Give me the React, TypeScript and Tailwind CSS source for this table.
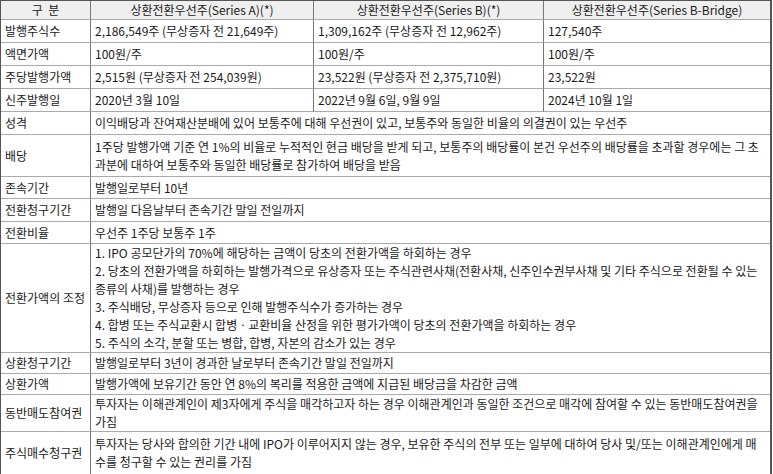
import React from "react";

type Row = {
  label: string;
  h: string;
  cells: React.ReactNode[];
};

const rows: Row[] = [
  {
    label: "발행주식수",
    h: "h-[23px]",
    cells: ["2,186,549주 (무상증자 전 21,649주)", "1,309,162주 (무상증자 전 12,962주)", "127,540주"],
  },
  { label: "액면가액", h: "h-[23px]", cells: ["100원/주", "100원/주", "100원/주"] },
  {
    label: "주당발행가액",
    h: "h-[23px]",
    cells: ["2,515원 (무상증자 전 254,039원)", "23,522원 (무상증자 전 2,375,710원)", "23,522원"],
  },
  { label: "신주발행일", h: "h-[23px]", cells: ["2020년 3월 10일", "2022년 9월 6일, 9월 9일", "2024년 10월 1일"] },
  {
    label: "성격",
    h: "h-[23px]",
    cells: ["이익배당과 잔여재산분배에 있어 보통주에 대해 우선권이 있고, 보통주와 동일한 비율의 의결권이 있는 우선주"],
  },
  {
    label: "배당",
    h: "h-[42px]",
    cells: [
      "1주당 발행가액 기준 연 1%의 비율로 누적적인 현금 배당을 받게 되고, 보통주의 배당률이 본건 우선주의 배당률을 초과할 경우에는 그 초과분에 대하여 보통주와 동일한 배당률로 참가하여 배당을 받음",
    ],
  },
  { label: "존속기간", h: "h-[22px]", cells: ["발행일로부터 10년"] },
  { label: "전환청구기간", h: "h-[23px]", cells: ["발행일 다음날부터 존속기간 말일 전일까지"] },
  { label: "전환비율", h: "h-[22px]", cells: ["우선주 1주당 보통주 1주"] },
  {
    label: "전환가액의 조정",
    h: "h-[108px]",
    cells: [
      <>
        <div>1. IPO 공모단가의 70%에 해당하는 금액이 당초의 전환가액을 하회하는 경우</div>
        <div>
          2. 당초의 전환가액을 하회하는 발행가격으로 유상증자 또는 주식관련사채(전환사채, 신주인수권부사채 및 기타 주식으로 전환될 수 있는
          종류의 사채)를 발행하는 경우
        </div>
        <div>3. 주식배당, 무상증자 등으로 인해 발행주식수가 증가하는 경우</div>
        <div>4. 합병 또는 주식교환시 합병ㆍ교환비율 산정을 위한 평가가액이 당초의 전환가액을 하회하는 경우</div>
        <div>5. 주식의 소각, 분할 또는 병합, 합병, 자본의 감소가 있는 경우</div>
      </>,
    ],
  },
  { label: "상환청구기간", h: "h-[21px]", cells: ["발행일로부터 3년이 경과한 날로부터 존속기간 말일 전일까지"] },
  { label: "상환가액", h: "h-[21px]", cells: ["발행가액에 보유기간 동안 연 8%의 복리를 적용한 금액에 지급된 배당금을 차감한 금액"] },
  {
    label: "동반매도참여권",
    h: "h-[37px]",
    cells: ["투자자는 이해관계인이 제3자에게 주식을 매각하고자 하는 경우 이해관계인과 동일한 조건으로 매각에 참여할 수 있는 동반매도참여권을 가짐"],
  },
  {
    label: "주식매수청구권",
    h: "h-[42px]",
    cells: ["투자자는 당사와 합의한 기간 내에 IPO가 이루어지지 않는 경우, 보유한 주식의 전부 또는 일부에 대하여 당사 및/또는 이해관계인에게 매수를 청구할 수 있는 권리를 가짐"],
  },
];

const headers = ["상환전환우선주(Series A)(*)", "상환전환우선주(Series B)(*)", "상환전환우선주(Series B-Bridge)"];

export default function App() {
  return (
    <div className="w-[773px] h-[474px] bg-white text-[#1a1a1a] text-[12px] leading-[18px] font-['Noto_Sans_CJK_KR',sans-serif]">
      <div className="w-[772px] border-t border-l border-r-2 border-b-2 border-[#555]">
        <table className="w-full table-fixed border-separate border-spacing-0">
          <colgroup>
            <col className="w-[90px]" />
            <col className="w-[223px]" />
            <col className="w-[230px]" />
            <col />
          </colgroup>
          <thead>
            <tr className="h-[19px] bg-[#efefef]">
              <th className="font-normal text-center border-r border-b border-r-[#777] border-b-[#aaa] whitespace-pre">구  분</th>
              {headers.map((h, i) => (
                <th
                  key={h}
                  className={`font-normal text-center border-b border-b-[#aaa] ${i < 2 ? "border-r border-r-[#777]" : ""}`}
                >
                  {h}
                </th>
              ))}
            </tr>
          </thead>
          <tbody>
            {rows.map((r, ri) => {
              const last = ri === rows.length - 1;
              return (
                <tr key={r.label} className={r.h}>
                  <td className={`px-[4px] align-middle whitespace-nowrap border-r border-r-[#777] ${last ? "" : "border-b border-b-[#aaa]"}`}>
                    {r.label}
                  </td>
                  {r.cells.length === 1 ? (
                    <td colSpan={3} className={`px-[4px] align-middle ${last ? "" : "border-b border-b-[#aaa]"}`}>
                      {r.cells[0]}
                    </td>
                  ) : (
                    r.cells.map((c, ci) => (
                      <td
                        key={ci}
                        className={`px-[4px] align-middle whitespace-nowrap ${ci < 2 ? "border-r border-r-[#777]" : ""} ${last ? "" : "border-b border-b-[#aaa]"}`}
                      >
                        {c}
                      </td>
                    ))
                  )}
                </tr>
              );
            })}
          </tbody>
        </table>
      </div>
    </div>
  );
}
